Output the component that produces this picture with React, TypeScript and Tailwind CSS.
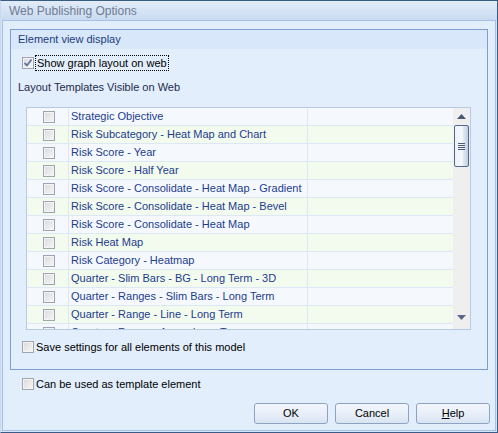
import React from "react";

const rows = [
  "Strategic Objective",
  "Risk Subcategory - Heat Map and Chart",
  "Risk Score - Year",
  "Risk Score - Half Year",
  "Risk Score - Consolidate - Heat Map - Gradient",
  "Risk Score - Consolidate - Heat Map - Bevel",
  "Risk Score - Consolidate - Heat Map",
  "Risk Heat Map",
  "Risk Category - Heatmap",
  "Quarter - Slim Bars - BG - Long Term - 3D",
  "Quarter - Ranges - Slim Bars - Long Term",
  "Quarter - Range - Line - Long Term",
  "Quarter - Range - Area - Long Term",
];

function Check({ checked = false }: { checked?: boolean }) {
  return (
    <div className="w-[12px] h-[12px] shrink-0 border border-[#9ea5af] bg-gradient-to-br from-[#dadada] to-[#f7f7f7] shadow-[inset_0_0_0_1px_#f4f4f4] flex items-center justify-center">
      {checked && (
        <svg width="10" height="10" viewBox="0 0 10 10">
          <path d="M1.5 5 L4 7.5 L8.5 1.5" stroke="#5a76a6" strokeWidth="1.8" fill="none" />
        </svg>
      )}
    </div>
  );
}

function Btn({ children }: { children: React.ReactNode }) {
  return (
    <div className="w-[74px] h-[21px] rounded-[3px] border border-[#8ea3c2] bg-gradient-to-b from-[#f3f7fc] via-[#e8eff8] to-[#d9e4f2] flex items-center justify-center text-[11px] text-black">
      {children}
    </div>
  );
}

export default function App() {
  return (
    <div className="w-[498px] h-[433px] flex flex-col border-t border-r border-b border-[#3b5b86] border-l border-l-[#c8d9f0] bg-[#d7e5f6] font-['Liberation_Sans',Arial,sans-serif]">
      <div className="h-[19px] shrink-0 bg-gradient-to-b from-[#e2ecf8] to-[#c9dbf1] flex items-center pl-[8px] text-[12px] text-[#6f7c92]">
        Web Publishing Options
      </div>
      <div className="flex-1 mx-[1px] mb-[1px] border border-[#a4c1e8] bg-[#e3eefd] flex flex-col">
        {/* group box */}
        <div className="mt-[8px] mx-[7px] h-[341px] border border-[#7b9ed0] flex flex-col">
          <div className="h-[19px] shrink-0 bg-[#d9e7fa] flex items-center pl-[7px] text-[11px] text-[#1b3c7c]">
            Element view display
          </div>
          <div className="mt-[6px] h-[16px] flex items-center pl-[11px]">
            <Check checked />
            <span className="ml-[1px] h-[16px] px-[1px] border border-dotted border-black flex items-center text-[11px] text-black">
              Show graph layout on web
            </span>
          </div>
          <div className="mt-[9px] h-[14px] flex items-center pl-[7px] text-[11px] text-[#1d2a48]">
            Layout Templates Visible on Web
          </div>
          <div className="mt-[13px] ml-[15px] w-[445px] h-[223px] border border-[#b7cae3] flex">
            <div className="flex-1 overflow-hidden relative">
              <div className="absolute top-0 bottom-0 left-[41px] w-px bg-[#dde8f6]" />
              <div className="absolute top-0 bottom-0 left-[280px] w-px bg-[#dde8f6]" />
              {rows.map((r, i) => (
                <div
                  key={r}
                  className={`h-[18px] flex border-b border-[#dde8f6] ${i % 2 === 0 ? "bg-[#f5f9fe]" : "bg-[#f3faee]"}`}
                >
                  <div className="w-[42px] shrink-0 flex items-center justify-center pl-[1px]">
                    <Check />
                  </div>
                  <div className="flex-1 flex items-center pl-[2px] text-[11px] text-[#1c3c8e] whitespace-nowrap">
                    {r}
                  </div>
                </div>
              ))}
            </div>
            <div className="w-[17px] shrink-0 bg-[#efefef] flex flex-col items-center">
              <div className="h-[17px] w-full flex items-center justify-center">
                <svg width="9" height="5" viewBox="0 0 9 5">
                  <path d="M4.5 0 L9 5 L0 5 Z" fill="#4a5878" />
                </svg>
              </div>
              <div className="w-[15px] h-[42px] rounded-[2px] border border-[#56698f] bg-gradient-to-r from-[#eef2f8] via-[#f4f7fb] to-[#bfcde0] flex flex-col items-center justify-center gap-[1px]">
                <div className="w-[7px] h-px bg-[#4b5b7a]" />
                <div className="w-[7px] h-px bg-[#4b5b7a]" />
                <div className="w-[7px] h-px bg-[#4b5b7a]" />
                <div className="w-[7px] h-px bg-[#4b5b7a]" />
              </div>
              <div className="flex-1" />
              <div className="h-[14px] w-full flex items-start justify-center">
                <svg width="9" height="5" viewBox="0 0 9 5">
                  <path d="M0 0 L9 0 L4.5 5 Z" fill="#5b6987" />
                </svg>
              </div>
            </div>
          </div>
          <div className="mt-[11px] h-[12px] flex items-center pl-[11px]">
            <Check />
            <span className="ml-[2px] text-[11px] text-black">Save settings for all elements of this model</span>
          </div>
        </div>
        <div className="mt-[8px] h-[12px] flex items-center pl-[19px]">
          <Check />
          <span className="ml-[2px] text-[11px] text-black">Can be used as template element</span>
        </div>
        <div className="mt-auto mb-[6px] mr-[5px] flex justify-end gap-[7px]">
          <Btn>OK</Btn>
          <Btn>Cancel</Btn>
          <Btn>
            <span>
              <span className="underline">H</span>elp
            </span>
          </Btn>
        </div>
      </div>
    </div>
  );
}
